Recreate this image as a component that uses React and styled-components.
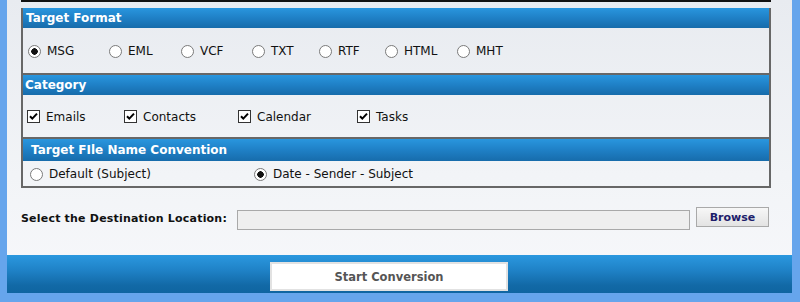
import React from 'react';
import styled, {createGlobalStyle} from 'styled-components';

const Global = createGlobalStyle`
    html, body {
        margin: 0;
        padding: 0;
        background: #66a5ec;
    }
    * {
        box-sizing: border-box;
    }
`;

const Frame = styled.div`
    width: 800px;
    height: 302px;
    background: #66a5ec;
    padding: 0 8px 9px 7px;
    font-family: "DejaVu Sans", Verdana, sans-serif;
    overflow: hidden;
`;

const Window = styled.div`
    height: 100%;
    display: flex;
    flex-direction: column;
    background: linear-gradient(180deg, #e8ebf0 0%, #f2f4f7 60%, #f7f8fb 100%);
`;

const Content = styled.div`
    padding: 0 21px 0 14px;
    flex: 1;
`;

const TopBox = styled.div`
    border: 2px solid #111;
    border-top: none;
    height: 2px;
`;

const Panel = styled.div`
    margin-top: 6px;
    border-left: 2px solid #676767;
    border-right: 2px solid #676767;
`;

const Header = styled.div`
    height: ${props => props.h || 20}px;
    display: flex;
    align-items: center;
    padding-left: ${props => props.indent || 3}px;
    background: linear-gradient(180deg, #2996de 0%, #1f80c6 50%, #176cab 100%);
    color: #fff;
    font-weight: bold;
    font-size: 12px;
`;

const Body = styled.div`
    height: ${props => props.h}px;
    display: flex;
    align-items: center;
    padding-left: ${props => props.indent || 5}px;
    padding-top: 1px;
    border-bottom: 2px solid #676767;
    font-size: 12px;
    color: #111;
`;

const Option = styled.label`
    display: flex;
    align-items: center;
    width: ${props => props.w}px;
    flex-shrink: 0;
`;

const Radio = styled.span`
    width: 13px;
    height: 13px;
    border-radius: 50%;
    border: 1px solid #7a7a7a;
    background: ${props => props.checked
        ? 'radial-gradient(circle, #111 0 3px, #fff 3.5px)'
        : '#fff'};
    margin-right: 6px;
    flex-shrink: 0;
`;

const Box = styled.span`
    width: 13px;
    height: 13px;
    border: 1px solid #333;
    background: #fff;
    margin-right: 6px;
    flex-shrink: 0;
    display: flex;
    align-items: center;
    justify-content: center;
`;

const Check = () => (
    <Box>
        <svg width="11" height="11" viewBox="0 0 11 11">
            <path d="M2 5.2 L4.3 7.6 L9 2.6" fill="none" stroke="#000" strokeWidth="2"/>
        </svg>
    </Box>
);

const DestRow = styled.div`
    margin-top: 19px;
    display: flex;
    align-items: center;
    height: 22px;
`;

const DestLabel = styled.span`
    font-size: 11px;
    font-weight: bold;
    letter-spacing: 0.2px;
    color: #111;
    width: 216px;
`;

const PathInput = styled.div`
    width: 453px;
    height: 20px;
    margin-top: 4px;
    background: #efefef;
    border: 1px solid #a9a9a9;
`;

const BrowseButton = styled.button`
    margin-left: 6px;
    width: 73px;
    height: 20px;
    margin-top: -2px;
    border: 1px solid #a9a9a9;
    background: linear-gradient(180deg, #f7f7f7, #e3e3e3);
    color: #1d1d6b;
    font-family: inherit;
    font-weight: bold;
    font-size: 11px;
    padding: 0;
`;

const BottomBar = styled.div`
    height: 38px;
    padding: 7px 0 0 263px;
    background: linear-gradient(180deg, #2b98df 0%, #1f82c7 40%, #1269a6 80%, #0f65a1 100%);
`;

const StartButton = styled.button`
    width: 238px;
    height: 29px;
    background: #fff;
    border: 2px solid #e2e2e2;
    color: #555;
    font-family: inherit;
    font-weight: bold;
    font-size: 11.5px;
    padding: 0;
`;

const formats = [
    {name: 'MSG', w: 81, checked: true},
    {name: 'EML', w: 72},
    {name: 'VCF', w: 71},
    {name: 'TXT', w: 67},
    {name: 'RTF', w: 66},
    {name: 'HTML', w: 72},
    {name: 'MHT', w: 60},
];

const categories = [
    {name: 'Emails', w: 97},
    {name: 'Contacts', w: 114},
    {name: 'Calendar', w: 119},
    {name: 'Tasks', w: 80},
];

export default function App() {
    return (
        <Frame>
            <Global/>
            <Window>
                <Content>
                    <TopBox/>
                    <Panel>
                        <Header indent={3}>Target Format</Header>
                        <Body h={47} indent={5}>
                            {formats.map(f => (
                                <Option key={f.name} w={f.w}>
                                    <Radio checked={f.checked}/>
                                    {f.name}
                                </Option>
                            ))}
                        </Body>
                        <Header indent={2}>Category</Header>
                        <Body h={44} indent={4}>
                            {categories.map(c => (
                                <Option key={c.name} w={c.w}>
                                    <Check/>
                                    {c.name}
                                </Option>
                            ))}
                        </Body>
                        <Header h={22} indent={8}>Target FIle Name Convention</Header>
                        <Body h={27} indent={7}>
                            <Option w={224}>
                                <Radio/>
                                Default (Subject)
                            </Option>
                            <Option w={200}>
                                <Radio checked/>
                                Date - Sender - Subject
                            </Option>
                        </Body>
                    </Panel>
                    <DestRow>
                        <DestLabel>Select the Destination Location:</DestLabel>
                        <PathInput/>
                        <BrowseButton>Browse</BrowseButton>
                    </DestRow>
                </Content>
                <BottomBar>
                    <StartButton>Start Conversion</StartButton>
                </BottomBar>
            </Window>
        </Frame>
    );
}
